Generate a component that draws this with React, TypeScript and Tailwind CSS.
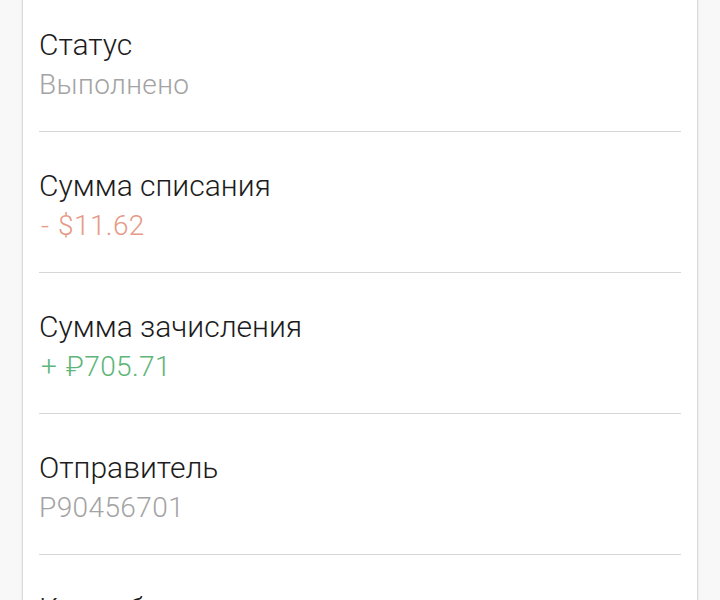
import React from "react";

const rows: { label: string; sign?: string; value: string; color: string }[] = [
  { label: "Статус", value: "Выполнено", color: "text-[#a3a3a3]" },
  { label: "Сумма списания", sign: "-", value: "$11.62", color: "text-[#e69a85]" },
  { label: "Сумма зачисления", sign: "+", value: "₽705.71", color: "text-[#5db579]" },
  { label: "Отправитель", value: "P90456701", color: "text-[#a3a3a3]" },
  { label: "Курс обмена", value: "1 USD = 60.73 RUB", color: "text-[#a3a3a3]" },
];

export default function App() {
  return (
    <div
      className="h-[600px] overflow-hidden bg-[#f8f8f8] px-[22px]"
      style={{ fontFamily: "Roboto, 'Noto Sans', sans-serif" }}
    >
      <div className="-mt-[9px] h-[640px] border-x border-[#dadada] bg-white px-4 shadow-[0_0_2px_rgba(0,0,0,0.12)]">
        {rows.map((r) => (
          <div key={r.label} className="border-b border-[#d6d6d6] pt-[34px] pb-[26px]">
            <div className="text-[30px] font-light leading-[40px] text-[#1c1c1c]">{r.label}</div>
            <div className={`text-[28px] font-light leading-[40px] ${r.color}`}>
              {r.sign ? <span className="ml-[2px] mr-[9px]">{r.sign}</span> : null}
              <span className="tracking-[0.4px]">{r.value}</span>
            </div>
          </div>
        ))}
      </div>
    </div>
  );
}
